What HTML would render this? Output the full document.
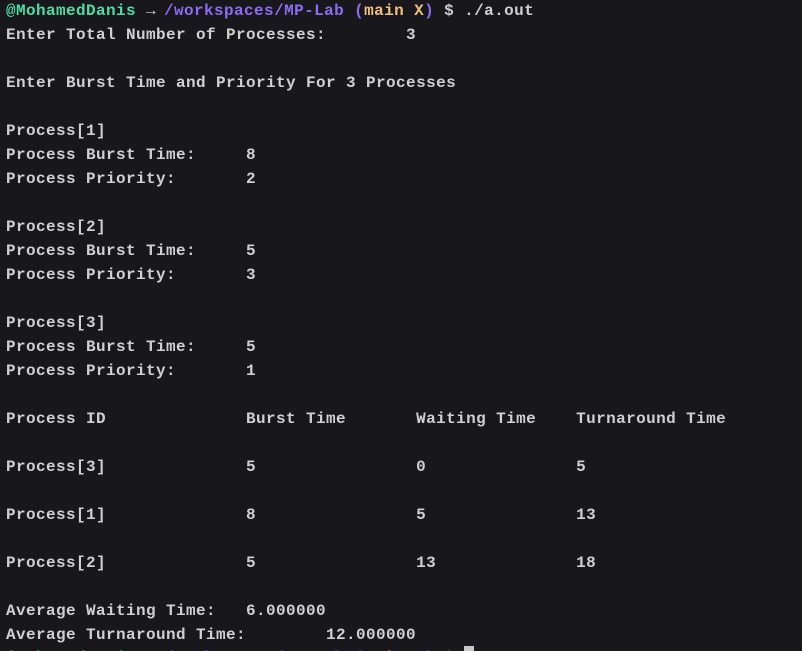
<!DOCTYPE html>
<html><head><meta charset="utf-8"><style>
html,body{margin:0;padding:0;background:#18171c;width:802px;height:651px;overflow:hidden}
pre{margin:-1px 0 0 6px;font-family:"Liberation Mono","DejaVu Sans Mono",monospace;font-weight:bold;font-size:16px;letter-spacing:0.4px;line-height:24px;color:#d0d0d0;white-space:pre}
.g{color:#4fdca6}.p{color:#8d6cf2}.y{color:#f2c07a}.w{color:#d0d0d0}
.ar{display:inline-block;width:18px;color:#d0d0d0}
.last{position:relative;top:-1px}
.cur{display:inline-block;width:10px;height:20px;background:#c8c8c8;vertical-align:-4px}
</style></head><body><pre><span class="g">@MohamedDanis</span> <span class="ar">→</span><span class="p">/workspaces/MP-Lab (</span><span class="y">main X</span><span class="p">)</span> $ ./a.out
Enter Total Number of Processes:        3

Enter Burst Time and Priority For 3 Processes

Process[1]
Process Burst Time:     8
Process Priority:       2

Process[2]
Process Burst Time:     5
Process Priority:       3

Process[3]
Process Burst Time:     5
Process Priority:       1

Process ID              Burst Time       Waiting Time    Turnaround Time

Process[3]              5                0               5

Process[1]              8                5               13

Process[2]              5                13              18

Average Waiting Time:   6.000000
Average Turnaround Time:        12.000000
<span class="last"><span class="g">@MohamedDanis</span> <span class="ar">→</span><span class="p">/workspaces/MP-Lab (</span><span class="y">main X</span><span class="p">)</span> $ <span class="cur"></span></span></pre></body></html>
